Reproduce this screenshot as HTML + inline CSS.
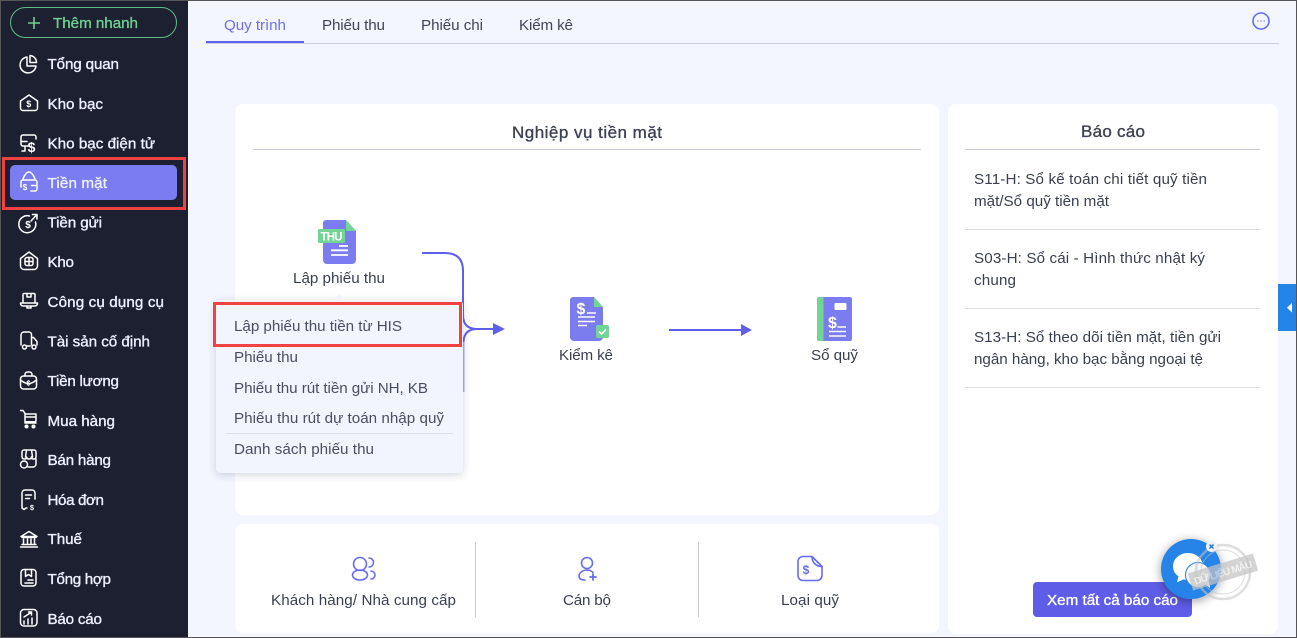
<!DOCTYPE html>
<html lang="vi"><head><meta charset="utf-8"><title>Tiền mặt</title>
<style>
html,body{margin:0;padding:0;width:1297px;height:638px;overflow:hidden;background:#f3f5ff}
svg{display:block}
text{font-family:"Liberation Sans",sans-serif}
.m text{font-size:15.2px;fill:#eef0ff;stroke:#eef0ff;stroke-width:.35}
.t{font-size:15.2px;fill:#3f4456}
.r{font-size:15.2px;fill:#3a3f50}
.p{font-size:15.2px;fill:#4a4e62}
.i{fill:none;stroke:#fff;stroke-width:1.5;stroke-linecap:round;stroke-linejoin:round}
.b{fill:none;stroke:#686cf2;stroke-width:1.6;stroke-linecap:round;stroke-linejoin:round}
</style></head><body>
<svg width="1297" height="638" viewBox="0 0 1297 638" xmlns="http://www.w3.org/2000/svg">
<defs>
<filter id="s" x="-10%" y="-10%" width="120%" height="125%"><feDropShadow dx="0" dy="2" stdDeviation="4" flood-color="#3a3f60" flood-opacity=".22"/></filter>
<filter id="c" x="-40%" y="-40%" width="180%" height="180%"><feDropShadow dx="0" dy="2" stdDeviation="5" flood-color="#000" flood-opacity=".4"/></filter>
</defs>
<rect width="1297" height="638" fill="#f3f5ff"/>

<!-- sidebar -->
<rect x="0" y="0" width="188" height="638" fill="#1d2031"/>
<rect x="10.500" y="7.500" width="166" height="30" rx="15" fill="none" stroke="#5fbd86"/>
<path d="M28 23h12M34 17v12" stroke="#6fd18f" stroke-width="1.600" fill="none"/>
<text x="53" y="28" font-size="15.200" fill="#6dd090" stroke="#6dd090" stroke-width=".35" textLength="85" lengthAdjust="spacing">Thêm nhanh</text>
<rect x="10" y="165" width="167" height="35" rx="5" fill="#7b7cf0"/>
<rect x="3.500" y="158.500" width="181" height="50" fill="none" stroke="#f04242" stroke-width="3"/>

<g class="m">
<text x="47.500" y="69" textLength="71.500" lengthAdjust="spacing">Tổng quan</text>
<text x="47.500" y="109" textLength="55.500" lengthAdjust="spacing">Kho bạc</text>
<text x="47.500" y="148.500" textLength="107.500" lengthAdjust="spacing">Kho bạc điện tử</text>
<text x="47.500" y="188" textLength="59.500" lengthAdjust="spacing">Tiền mặt</text>
<text x="47.500" y="227.500" textLength="54.500" lengthAdjust="spacing">Tiền gửi</text>
<text x="47.500" y="267" textLength="26.500" lengthAdjust="spacing">Kho</text>
<text x="47.500" y="307" textLength="116.500" lengthAdjust="spacing">Công cụ dụng cụ</text>
<text x="47.500" y="346.500" textLength="102.500" lengthAdjust="spacing">Tài sản cố định</text>
<text x="47.500" y="386" textLength="71.500" lengthAdjust="spacing">Tiền lương</text>
<text x="47.500" y="426" textLength="67.500" lengthAdjust="spacing">Mua hàng</text>
<text x="47.500" y="465" textLength="63.500" lengthAdjust="spacing">Bán hàng</text>
<text x="47.500" y="505" textLength="56.500" lengthAdjust="spacing">Hóa đơn</text>
<text x="47.500" y="544" textLength="34.500" lengthAdjust="spacing">Thuế</text>
<text x="47.500" y="584" textLength="63.500" lengthAdjust="spacing">Tổng hợp</text>
<text x="47.500" y="624" textLength="54.500" lengthAdjust="spacing">Báo cáo</text>
</g>

<!-- sidebar icons -->
<g class="i">
<path d="M27 57a8 8 0 1 0 9 9h-9z"/><path d="M30 55.500a7 7 0 0 1 6.500 7h-6.500z"/>
<path d="M20.500 101l8.500-6 8.500 6v7a2.500 2.500 0 0 1-2.500 2.500h-12a2.500 2.500 0 0 1-2.500-2.500z"/>
<path d="M36 139v-2a2 2 0 0 0-2-2H23a2 2 0 0 0-2 2v7a2 2 0 0 0 2 2h5M21 141.500h6M25 146.500v4.500h-3"/>
<path d="M23 179c1-3 3.500-7 6-7s5 4 6 7M21 187v-5a2 2 0 0 1 2-2h12a2 2 0 0 1 2 2v7a2 2 0 0 1-2 2h-4M31.500 185.500h5.500"/>
<path d="M35.500 222a8.500 8.500 0 1 1-6-6"/><path d="M31 221l6-6.500M32.500 214.500h4.500v4.500"/>
<path d="M20.500 258.500l8.500-6.500 8.500 6.500v7.500a3.500 3.500 0 0 1-3.500 3.500h-10a3.500 3.500 0 0 1-3.500-3.500z"/><rect x="25" y="257.500" width="8" height="8" rx="2"/><path d="M29 257.500v8M25 261.500h8"/>
<path d="M23 303v-8.500a1 1 0 0 1 1-1h10a1 1 0 0 1 1 1v8.500M20.500 303h17c0 2-1 3-3 3h-11c-2 0-3-1-3-3zM27 293.500v3.500h4v-3.500M27 306v2h4v-2"/>
<path d="M21 345v-10a3 3 0 0 1 3-3h5a2.500 2.500 0 0 1 2.500 2.500V345M31.500 337.500h2l3.500 4v3.500M27 346h3"/><circle cx="24.500" cy="347" r="2"/><circle cx="34" cy="347" r="2"/>
<rect x="20.500" y="376" width="16" height="13" rx="3"/><path d="M25 376v-1.500a2.500 2.500 0 0 1 2.500-2.500h2a2.500 2.500 0 0 1 2.500 2.500V376M20.500 380c3 2.500 5 3.500 8 3.500s5-1 8-3.500"/>
<path d="M20.500 410.500h2.500l2 3v9.500h11M25 414h11v6.500c0 .8-.5 1.300-1.300 1.300H25M25 417h11"/><circle cx="26.500" cy="426.500" r="1.300" fill="#fff"/><circle cx="33.500" cy="426.500" r="1.300" fill="#fff"/>
<path d="M22 457v-5a2 2 0 0 1 2-2h10a2 2 0 0 1 2 2v5c0 1.500-1.500 2-2.500 2s-2.200-.5-2.200-2c0 1.500-1.200 2-2.300 2s-2.300-.5-2.300-2c0 1.500-1.200 2-2.200 2s-2.500-.5-2.500-2zM26.500 450l-1 7M31.500 450l1 7M36 459v5a3 3 0 0 1-3 3h-5"/><circle cx="24" cy="464.500" r="3.500"/>
<path d="M22 508v-15a3 3 0 0 1 3-3h7a3 3 0 0 1 3 3v6M22 508l2 1.500 2-1.500M26 508h1M25.500 495h6M25.500 498.500h4"/>
<path d="M21 536.500L29 531.500l8 5zM22 537.500h14M23.500 539v5M27.500 539v5M31 539v5M34.500 539v5M22 544.500h14M20.500 547h17"/>
<rect x="21" y="569.500" width="15" height="16.500" rx="3"/><path d="M25.500 569.500v7l3-2 3 2v-7M28 580h5M25 583h8"/>
<rect x="20.500" y="609.500" width="16.500" height="16.500" rx="3.500"/><path d="M24 624v-3M28 624v-5M32 624v-6M24 617l7-4.500M28.500 612h3v3"/>
</g>
<g font-weight="700" fill="#fff" text-anchor="middle">
<text x="28.800" y="107" font-size="9">$</text>
<text x="31.500" y="152" font-size="14">$</text>
<text x="25" y="190" font-size="8">$</text>
<text x="28" y="228" font-size="10">$</text>
<text x="28.500" y="385.500" font-size="7">$</text>
<text x="32" y="510" font-size="7.500">$</text>
</g>

<!-- tabs -->
<text x="224" y="30" class="t" style="fill:#6d6ff0" textLength="62" lengthAdjust="spacing">Quy trình</text>
<text x="322" y="30" class="t" textLength="63" lengthAdjust="spacing">Phiếu thu</text>
<text x="421" y="30" class="t" textLength="62" lengthAdjust="spacing">Phiếu chi</text>
<text x="519" y="30" class="t" textLength="54" lengthAdjust="spacing">Kiểm kê</text>
<rect x="206" y="43" width="1073" height="1" fill="#cccde0"/>
<rect x="206" y="41" width="98" height="2" fill="#5f62f0"/>
<circle cx="1261" cy="21" r="8" fill="none" stroke="#686cf2" stroke-width="1.600"/>
<path d="M1257 21h1.500M1260.300 21h1.500M1263.500 21h1.500" stroke="#8a8df5" stroke-width="1.200"/>

<!-- cards -->
<rect x="235" y="104" width="704" height="411" rx="8" fill="#fff"/>
<rect x="235" y="524" width="704" height="109" rx="8" fill="#fff"/>
<rect x="948" y="104" width="330" height="530" rx="8" fill="#fff"/>

<text x="512" y="138" font-size="17" fill="#3d4154" stroke="#3d4154" stroke-width=".35" textLength="150" lengthAdjust="spacing">Nghiệp vụ tiền mặt</text>
<rect x="253" y="149" width="668" height="1" fill="#c9cad8"/>

<!-- flow -->
<g fill="none" stroke="#5e60ea" stroke-width="2">
<path d="M422 253H445Q463 253 463 271V315Q463 329 477 329H495"/>
<path d="M477 329Q464 329 463.500 342" />
<path d="M463.500 342V392" stroke="#a9abf4"/>
<path d="M669 330H742"/>
</g>
<path d="M493 323l12 6-12 6zM741 324l11 6-11 6z" fill="#5e60ea"/>

<!-- THU doc -->
<path d="M326 220h20l10 11v29a4 4 0 0 1-4 4h-25a4 4 0 0 1-4-4v-37a3 3 0 0 1 3-3z" fill="#7b7cf0"/>
<path d="M346 220l10 11h-10z" fill="#72d495"/>
<rect x="318" y="229" width="27" height="14" rx="1.500" fill="#72d495"/>
<text x="320.500" y="240.300" font-size="11.500" font-weight="700" fill="#fff" textLength="22" lengthAdjust="spacing">THU</text>
<path d="M339 246h9M331 250.300h17M331 255h17" stroke="#fff" stroke-width="1.800"/>
<text x="293" y="283" class="r" textLength="92" lengthAdjust="spacing">Lập phiếu thu</text>

<!-- Kiểm kê doc -->
<path d="M573 297h21l9 10v30a4 4 0 0 1-4 4h-25a4 4 0 0 1-4-4v-37a3 3 0 0 1 3-3z" fill="#7b7cf0"/>
<path d="M594 297l9 10h-9z" fill="#72d495"/>
<text x="576.500" y="314" font-size="16" font-weight="700" fill="#fff">$</text>
<path d="M587 313h9M578 317h17M578 321.500h17M578 325.500h9" stroke="#fff" stroke-width="1.600"/>
<rect x="596" y="325" width="13" height="13" rx="2" fill="#72d495"/>
<path d="M599 331.500l2.500 2.500 4.500-4.500" stroke="#fff" stroke-width="1.600" fill="none"/>
<text x="559" y="360" class="r" textLength="54" lengthAdjust="spacing">Kiểm kê</text>

<!-- Sổ quỹ -->
<rect x="817" y="297" width="35" height="44" rx="2" fill="#7b7cf0"/>
<path d="M819 297h4.500v44H819a2 2 0 0 1-2-2v-40a2 2 0 0 1 2-2z" fill="#72d495"/>
<rect x="834.500" y="303" width="12" height="7" rx="1" fill="#fff"/>
<text x="828" y="328" font-size="16" font-weight="700" fill="#fff">$</text>
<path d="M837.500 327h8.500M829 331.500h17M829 336h17" stroke="#fff" stroke-width="1.600"/>
<text x="811" y="360" class="r" textLength="47" lengthAdjust="spacing">Sổ quỹ</text>

<!-- popup -->
<rect x="216" y="300" width="247" height="173" rx="5" fill="#f2f5fe" filter="url(#s)"/>
<path d="M332 301l7-7 7 7z" fill="#f2f5fe"/>
<text x="234" y="331" class="p" textLength="168" lengthAdjust="spacing">Lập phiếu thu tiền từ HIS</text>
<text x="234" y="362" class="p" textLength="64" lengthAdjust="spacing">Phiếu thu</text>
<text x="234" y="393" class="p" textLength="194" lengthAdjust="spacing">Phiếu thu rút tiền gửi NH, KB</text>
<text x="234" y="423" class="p" textLength="210" lengthAdjust="spacing">Phiếu thu rút dự toán nhập quỹ</text>
<rect x="226" y="433" width="227" height="1" fill="#dcdee9"/>
<text x="234" y="454" class="p" textLength="140" lengthAdjust="spacing">Danh sách phiếu thu</text>
<rect x="214.500" y="303.500" width="246" height="42" fill="none" stroke="#f04242" stroke-width="3"/>

<!-- bottom card -->
<rect x="475" y="542" width="1" height="75" fill="#c6cae0"/>
<rect x="698" y="542" width="1" height="75" fill="#c6cae0"/>
<g class="b">
<circle cx="360" cy="564" r="6.500"/><ellipse cx="360" cy="575" rx="7.500" ry="5"/><path d="M369 558a4.500 4.500 0 0 1 0 9M371 571a4 4 0 0 1 0 8"/>
<circle cx="587" cy="563" r="5.500"/><path d="M593 572.500a8 8 0 0 0-5.500-2.500c-5 0-8.500 3-8.500 6s2.500 4 6 4"/><path d="M590 577h6M593 574v6" stroke-width="1.800"/>
<path d="M803 556.500h9l10 10v9a5 5 0 0 1-5 5h-14a5 5 0 0 1-5-5v-14a5 5 0 0 1 5-5z"/><path d="M812 556.500c0 6 4 10 10 10"/>
</g>
<text x="806" y="574" font-size="12" font-weight="700" fill="#686cf2" text-anchor="middle">$</text>
<text x="271" y="605" class="r" textLength="185" lengthAdjust="spacing">Khách hàng/ Nhà cung cấp</text>
<text x="563" y="605" class="r" textLength="48" lengthAdjust="spacing">Cán bộ</text>
<text x="781" y="605" class="r" textLength="58" lengthAdjust="spacing">Loại quỹ</text>

<!-- right card -->
<text x="1081" y="137" font-size="17" fill="#3d4154" stroke="#3d4154" stroke-width=".35" textLength="64" lengthAdjust="spacing">Báo cáo</text>
<rect x="965" y="149" width="295" height="1" fill="#c9cad8"/>
<text x="974" y="184" class="r" textLength="233" lengthAdjust="spacing">S11-H: Sổ kế toán chi tiết quỹ tiền</text>
<text x="974" y="206" class="r" textLength="135" lengthAdjust="spacing">mặt/Sổ quỹ tiền mặt</text>
<rect x="965" y="229" width="295" height="1" fill="#dcdde3"/>
<text x="974" y="263" class="r" textLength="231" lengthAdjust="spacing">S03-H: Sổ cái - Hình thức nhật ký</text>
<text x="974" y="285" class="r" textLength="42" lengthAdjust="spacing">chung</text>
<rect x="965" y="308" width="295" height="1" fill="#dcdde3"/>
<text x="974" y="342" class="r" textLength="247" lengthAdjust="spacing">S13-H: Sổ theo dõi tiền mặt, tiền gửi</text>
<text x="974" y="364" class="r" textLength="229" lengthAdjust="spacing">ngân hàng, kho bạc bằng ngoại tệ</text>
<rect x="965" y="387" width="295" height="1" fill="#dcdde3"/>

<rect x="1033" y="582" width="159" height="35" rx="4" fill="#5f5de8"/>
<text x="1047" y="605" font-size="15.200" fill="#fff" stroke="#fff" stroke-width=".35" textLength="131" lengthAdjust="spacing">Xem tất cả báo cáo</text>

<!-- chat bubble + watermark -->
<circle cx="1191" cy="569" r="30" fill="#2584e8" filter="url(#c)"/>
<path d="M1188 553c8.500 0 15 6 15 13.500s-6.500 13.500-15 13.500c-1.500 0-3-.2-4.500-.6l-6.500 3 1.500-6c-3.500-2.500-5.500-6-5.500-9.900 0-7.500 6.500-13.500 15-13.500z" fill="#fff"/>
<circle cx="1198" cy="575" r="12.500" fill="#f4f6f8" stroke="#2584e8" stroke-width="1"/>
<path d="M1205 584l5 4-1-7z" fill="#f4f6f8"/>
<g opacity=".55">
<circle cx="1223" cy="572" r="27" fill="none" stroke="#c4c4c4" stroke-width="2.500"/>
<circle cx="1223" cy="572" r="22" fill="none" stroke="#c4c4c4" stroke-width="1"/>
</g>
<g transform="rotate(-17 1223 572)" opacity=".72">
<rect x="1189" y="563" width="68" height="18" fill="#c4c4c4"/>
<text x="1193" y="576" font-size="10" font-weight="700" fill="#eeeeee" textLength="60" lengthAdjust="spacing">DỮ LIỆU MẪU</text>
</g>
<circle cx="1211.500" cy="546.500" r="5.500" fill="#eef2f8"/>
<path d="M1209.500 544.500l4 4M1213.500 544.500l-4 4" stroke="#1a6fc9" stroke-width="1.300"/>

<!-- right handle -->
<rect x="1278" y="284" width="18" height="47" fill="#2584e8"/>
<path d="M1292 303v9.500l-5-4.700z" fill="#fff"/>

<!-- frame -->
<rect x=".5" y=".5" width="1296" height="637" fill="none" stroke="#555"/>
</svg>
</body></html>
